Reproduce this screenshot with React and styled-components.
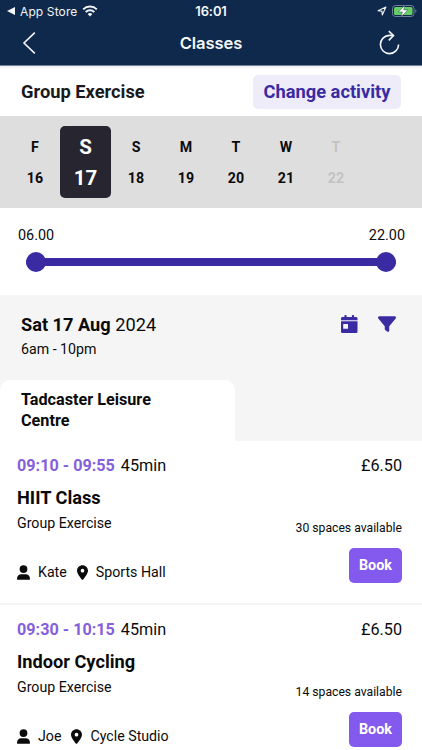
import styled, { createGlobalStyle } from "styled-components";
import { FaFilter, FaLocationDot } from "react-icons/fa6";

const GlobalStyle = createGlobalStyle`
  * {
    box-sizing: border-box;
  }

  body {
    margin: 0;
    background: #ffffff;
    color: #0b0b0c;
    font-family: Roboto, "Liberation Sans", sans-serif;
    overflow: hidden;
  }

  button {
    border: none;
    padding: 0;
    font-family: inherit;
    cursor: pointer;
  }
`;

const Page = styled.div`
  height: 750px;
  overflow: hidden;
`;

const Header = styled.header`
  height: 66px;
  background: #0e294b;
  border-bottom: 1px solid #74819a;
  color: #f3f6fa;
  font-family: Inter, "Liberation Sans", sans-serif;
`;

const StatusBar = styled.div`
  display: grid;
  grid-template-columns: 1fr auto 1fr;
  align-items: center;
  height: 22px;
  padding: 0 5px;
`;

const StatusSide = styled.div`
  display: flex;
  align-items: center;
  justify-content: ${(props) => (props.$end ? "flex-end" : "flex-start")};
  gap: 5px;
  padding-left: 2px;
  font-size: 12px;
  letter-spacing: 0.12px;
`;

const Clock = styled.div`
  font-size: 13px;
  font-weight: 600;
  letter-spacing: -0.1px;
`;

const NavBar = styled.div`
  display: grid;
  grid-template-columns: 1fr auto 1fr;
  align-items: center;
  height: 42px;
  padding: 0 22px;
`;

const NavTitle = styled.div`
  font-size: 16.6px;
  font-weight: 600;
  letter-spacing: -0.1px;
`;

const NavButton = styled.button`
  display: flex;
  justify-self: ${(props) => (props.$end ? "end" : "start")};
  background: none;
  color: inherit;
`;

const ActivityBar = styled.div`
  display: flex;
  align-items: center;
  justify-content: space-between;
  height: 50px;
  padding: 0 21px;
  border-top: 2px solid #f1f1f8;
`;

const ActivityName = styled.div`
  margin-bottom: 2px;
  font-size: 18.3px;
  font-weight: 700;
  color: #1a1a1c;
`;

const ChangeButton = styled.button`
  width: 148px;
  height: 34px;
  padding-bottom: 1px;
  border-radius: 5px;
  background: #eeecf8;
  color: #3a2ba3;
  font-size: 18.3px;
  font-weight: 700;
`;

const DayStrip = styled.div`
  display: flex;
  align-items: center;
  height: 92px;
  padding: 0 10px;
  background: #dedede;
`;

const Day = styled.div`
  display: flex;
  flex-direction: column;
  align-items: center;
  justify-content: center;
  gap: 1px;
  width: ${(props) => (props.$selected ? "51px" : "50px")};
  height: 72px;
  border-radius: 5px;
  background: ${(props) => (props.$selected ? "#262530" : "transparent")};
  color: ${(props) =>
    props.$selected ? "#ffffff" : props.$disabled ? "#c3c3c3" : "#0b0b0c"};
  font-size: ${(props) => (props.$selected ? "20.5px" : "14.2px")};
  font-weight: 700;
  line-height: 30px;
`;

const SliderArea = styled.div`
  height: 87px;
  padding: 19px 17px 0 18px;
`;

const SliderLabels = styled.div`
  display: flex;
  justify-content: space-between;
  font-size: 14.4px;
  line-height: 18px;
`;

const Track = styled.div`
  display: flex;
  align-items: center;
  justify-content: space-between;
  height: 8px;
  margin: 13px 9px 0 8px;
  border-radius: 4px;
  background: #3a2ba3;
`;

const Knob = styled.div`
  flex: none;
  width: 20px;
  height: 20px;
  border-radius: 50%;
  background: #3a2ba3;
`;

const DateSection = styled.section`
  display: flex;
  flex-direction: column;
  justify-content: space-between;
  height: 146px;
  background: #f5f5f5;
`;

const DateRow = styled.div`
  display: flex;
  justify-content: space-between;
  padding: 19px 26px 0 21px;
`;

const DateTitle = styled.div`
  font-size: 18.2px;
  line-height: 22px;
`;

const DateRange = styled.div`
  font-size: 14.2px;
  line-height: 18px;
  margin-top: 4px;
`;

const DateActions = styled.div`
  display: flex;
  gap: 20px;
  padding-top: 1px;
  color: #3a2ba3;
`;

const VenueTab = styled.div`
  width: 235px;
  height: 61px;
  padding: 10px 60px 0 21px;
  border-radius: 10px 10px 0 0;
  background: #ffffff;
  font-size: 16.2px;
  font-weight: 700;
  line-height: 20.5px;
`;

const ClassCard = styled.article`
  height: 164px;
  padding: 14px 20px 0 17px;
  border-bottom: 2px solid #f5f5f5;
`;

const CardRow = styled.div`
  display: flex;
  justify-content: space-between;
`;

const TimeLine = styled.div`
  font-size: 16.2px;
  line-height: 21px;
`;

const TimeSlot = styled.span`
  margin-right: 6px;
  color: #8560dc;
  font-weight: 700;
`;

const Price = styled.div`
  font-size: 16.2px;
  line-height: 21px;
`;

const ClassName = styled.h2`
  margin: 11px 0 0;
  font-size: 18.2px;
  font-weight: 700;
  line-height: 22px;
`;

const Category = styled.div`
  margin-top: 5px;
  font-size: 14.2px;
  line-height: 18px;
`;

const Details = styled.div`
  display: flex;
  align-items: center;
  gap: 8px;
  height: 18px;
  margin-top: 31px;
  font-size: 14.2px;
`;

const Place = styled.div`
  display: flex;
  align-items: center;
  gap: 8px;
  margin-left: 2px;
`;

const PinIcon = styled(FaLocationDot)`
  width: 11px;
  height: 15px;
`;

const Booking = styled.div`
  display: flex;
  flex-direction: column;
  align-items: flex-end;
`;

const Spaces = styled.div`
  margin-top: 44px;
  font-size: 12.2px;
  line-height: 17px;
`;

const BookButton = styled.button`
  width: 53px;
  height: 35px;
  margin-top: 11px;
  padding-bottom: 1px;
  border-radius: 5px;
  background: #835aed;
  color: #ffffff;
  font-size: 14.4px;
  font-weight: 700;
`;

const days = [
  { name: "F", date: 16 },
  { name: "S", date: 17, selected: true },
  { name: "S", date: 18 },
  { name: "M", date: 19 },
  { name: "T", date: 20 },
  { name: "W", date: 21 },
  { name: "T", date: 22, disabled: true },
];

const classes = [
  {
    time: "09:10 - 09:55",
    duration: "45min",
    price: "£6.50",
    name: "HIIT Class",
    category: "Group Exercise",
    spaces: 30,
    instructor: "Kate",
    place: "Sports Hall",
  },
  {
    time: "09:30 - 10:15",
    duration: "45min",
    price: "£6.50",
    name: "Indoor Cycling",
    category: "Group Exercise",
    spaces: 14,
    instructor: "Joe",
    place: "Cycle Studio",
  },
];

function WifiIcon() {
  return (
    <svg width="16" height="12" viewBox="0 0 16 12" fill="none">
      <path d="M1.2 4.4a9.7 9.7 0 0 1 13.6 0" stroke="currentColor" strokeWidth="2" />
      <path d="M3.7 7.1a6.1 6.1 0 0 1 8.6 0" stroke="currentColor" strokeWidth="2" />
      <path d="M5.6 9.1a3.4 3.4 0 0 1 4.8 0L8 11.6z" fill="currentColor" />
    </svg>
  );
}

function LocationIcon() {
  return (
    <svg width="10" height="10" viewBox="0 0 10 10" fill="none">
      <path
        d="M8.9 1.1 1 4.7l3.9.4.4 3.9z"
        stroke="currentColor"
        strokeWidth="1.1"
        strokeLinejoin="round"
      />
    </svg>
  );
}

function BatteryIcon() {
  return (
    <svg width="25" height="14" viewBox="0 0 25 14" fill="none">
      <rect x="0.5" y="1.5" width="21.5" height="11" rx="3" stroke="#71809a" />
      <rect x="2" y="3" width="18.5" height="8" rx="1.6" fill="#67cd67" />
      <path d="M23.3 5.2v3.6c.7-.3 1.1-1 1.1-1.8s-.4-1.5-1.1-1.8z" fill="#71809a" />
      <path
        d="M12.9 1.2 6.4 7.9h4l-1.3 4.9 6.7-6.9h-4.1z"
        fill="#ffffff"
        stroke="#0e294b"
        strokeWidth="0.4"
      />
    </svg>
  );
}

function BackIcon() {
  return (
    <svg width="14" height="22" viewBox="0 0 14 22" fill="none">
      <path d="M12.8 0.7 2 11l10.8 10.3" stroke="currentColor" strokeWidth="1.6" />
    </svg>
  );
}

function ReloadIcon() {
  return (
    <svg width="22" height="26" viewBox="0 0 22 26" fill="none">
      <path
        d="M20.6 14.5a9.1 9.1 0 1 1-9.2-9.1h3.7"
        stroke="currentColor"
        strokeWidth="1.6"
      />
      <path d="M10.8 1.1l4.7 4.4-4.7 4.9" stroke="currentColor" strokeWidth="1.6" />
    </svg>
  );
}

function CalendarIcon() {
  return (
    <svg width="17" height="18" viewBox="0 0 17 18" fill="currentColor">
      <rect x="3.4" y="0" width="2.2" height="4" rx="0.8" />
      <rect x="10.9" y="0" width="2.2" height="4" rx="0.8" />
      <path d="M0 5.2V3.6C0 2.7.7 2 1.6 2h13.3c.9 0 1.6.7 1.6 1.6v1.6z" />
      <path
        fillRule="evenodd"
        d="M0 6.3h16.5v10.1c0 .9-.7 1.6-1.6 1.6H1.6C.7 18 0 17.3 0 16.4zM2.8 9.1c-.4 0-.6.2-.6.6v3.5c0 .4.2.6.6.6h3.6c.4 0 .6-.2.6-.6V9.7c0-.4-.2-.6-.6-.6z"
      />
    </svg>
  );
}

function PersonIcon() {
  return (
    <svg width="13" height="15" viewBox="0 0 13 15" fill="currentColor">
      <circle cx="6.5" cy="4.1" r="3.9" />
      <path d="M0 13.9c0-2.7 1.7-4.7 4.3-4.7h4.4c2.6 0 4.3 2 4.3 4.7 0 .6-.4.9-.9.9H.9c-.5 0-.9-.3-.9-.9z" />
    </svg>
  );
}

function ClassItem({ item }) {
  return (
    <ClassCard>
      <CardRow>
        <div>
          <TimeLine>
            <TimeSlot>{item.time}</TimeSlot>
            {item.duration}
          </TimeLine>
          <ClassName>{item.name}</ClassName>
          <Category>{item.category}</Category>
          <Details>
            <PersonIcon />
            {item.instructor}
            <Place>
              <PinIcon />
              {item.place}
            </Place>
          </Details>
        </div>
        <Booking>
          <Price>{item.price}</Price>
          <Spaces>{item.spaces} spaces available</Spaces>
          <BookButton>Book</BookButton>
        </Booking>
      </CardRow>
    </ClassCard>
  );
}

function App() {
  return (
    <Page>
      <GlobalStyle />
      <Header>
        <StatusBar>
          <StatusSide>
            <svg width="8" height="8" viewBox="0 0 8 8">
              <path d="M8 0v8L0 4z" fill="currentColor" />
            </svg>
            App Store
            <WifiIcon />
          </StatusSide>
          <Clock>16:01</Clock>
          <StatusSide $end>
            <LocationIcon />
            <BatteryIcon />
          </StatusSide>
        </StatusBar>
        <NavBar>
          <NavButton aria-label="Back">
            <BackIcon />
          </NavButton>
          <NavTitle>Classes</NavTitle>
          <NavButton $end aria-label="Reload">
            <ReloadIcon />
          </NavButton>
        </NavBar>
      </Header>
      <ActivityBar>
        <ActivityName>Group Exercise</ActivityName>
        <ChangeButton>Change activity</ChangeButton>
      </ActivityBar>
      <DayStrip>
        {days.map((day) => (
          <Day key={day.date} $selected={day.selected} $disabled={day.disabled}>
            <span>{day.name}</span>
            <span>{day.date}</span>
          </Day>
        ))}
      </DayStrip>
      <SliderArea>
        <SliderLabels>
          <span>06.00</span>
          <span>22.00</span>
        </SliderLabels>
        <Track>
          <Knob />
          <Knob />
        </Track>
      </SliderArea>
      <DateSection>
        <DateRow>
          <div>
            <DateTitle>
              <b>Sat 17 Aug</b> 2024
            </DateTitle>
            <DateRange>6am - 10pm</DateRange>
          </div>
          <DateActions>
            <CalendarIcon />
            <FaFilter size={18} />
          </DateActions>
        </DateRow>
        <VenueTab>Tadcaster Leisure Centre</VenueTab>
      </DateSection>
      {classes.map((item) => (
        <ClassItem key={item.name} item={item} />
      ))}
    </Page>
  );
}

export default App;
